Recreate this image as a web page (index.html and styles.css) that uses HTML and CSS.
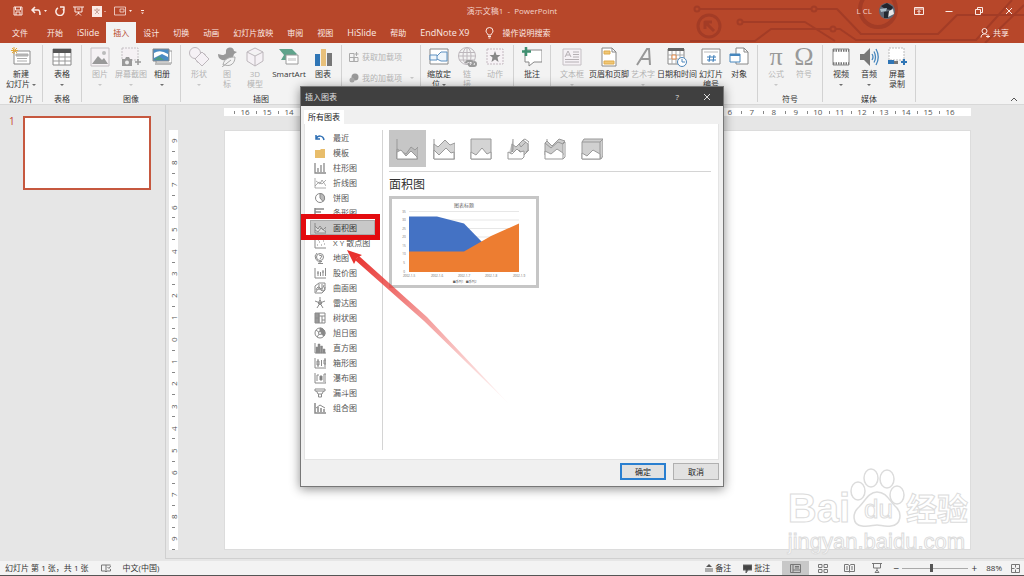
FILE: index.html
```html
<!DOCTYPE html>
<html lang="zh-CN">
<head>
    <meta charset="UTF-8" />
    <meta name="viewport" content="width=device-width, initial-scale=1" />
    <title>演示文稿1 - PowerPoint</title>
    <link rel="stylesheet" href="styles.css">
</head>
<body>

<header>
  <svg class="circuit" width="340" height="43" viewBox="684 0 340 43">
    <g fill="none" stroke="#a33c26" stroke-width="2">
      <path d="M700 9H811M817 9H837L861 34H938L957 15H1024"/>
      <path d="M743 22H805L835 41M690 41H755L771 29H830M836 29H840L856 40H976L1012 0M985 43L1024 5"/>
      <circle cx="697" cy="9" r="2.5"/><circle cx="740" cy="22" r="2.5"/><circle cx="814" cy="9" r="2.5"/><circle cx="833" cy="29" r="2.5"/>
      <circle cx="709" cy="26" r="11" stroke-width="3"/><path d="M714 31L705 22M705 29V22H712" stroke-width="3"/>
      <circle cx="878" cy="9" r="18" stroke-width="4"/>
    </g>
  </svg>

  <div class="titlebar">
    <div class="quick">
      <button aria-label="保存"><svg width="10" height="10" viewBox="0 0 10 10"><path d="M1 1H9V9H1ZM3 9V6H7V9M2.5 1V4H7.500V1"/></svg></button>
      <button aria-label="撤消"><svg width="16" height="10" viewBox="0 0 16 10"><path d="M4 1L1 4L4 7M1 4H7C9 4 9 6 9 9" stroke-width="1.6"/><path class="solid" d="M13 4H16L14.500 6Z"/></svg></button>
      <button aria-label="恢复"><svg width="10" height="10" viewBox="0 0 10 10"><path d="M3 2A4 4 0 1 0 8 3M5 1H9V4.500" stroke-width="1.5"/></svg></button>
      <button aria-label="放映"><svg width="11" height="10" viewBox="0 0 11 10"><path d="M0 1H11M2 1V6H9V1M4 3H7M5.500 6V8M3 9.500L5.500 7L8 9.500"/></svg></button>
      <button aria-label="字体"><svg width="14" height="11" viewBox="0 0 14 11"><path class="solid" d="M0 0H10V11H0Z"/><path d="M2 4H8M5 2V4M3 8L7 4M3 4L7 8" stroke="#c9a79e"/><path class="solid" d="M12 5H14V6H12Z" opacity=".5"/></svg></button>
      <button aria-label="形状"><svg width="19" height="10" viewBox="0 0 19 10"><path d="M.5 1H11.500V9H.5ZM6 3H10V6H6Z" opacity=".75"/><path class="solid" d="M15 4H18L16.500 6Z"/></svg></button>
      <button aria-label="自定义"><svg width="4" height="8" viewBox="0 0 4 8"><path class="solid" d="M0 3H3V4H0ZM0 5.500H3L1.500 7Z"/></svg></button>
    </div>
    <div class="doc-title">演示文稿1&nbsp; -&nbsp; PowerPoint</div>
    <div class="window-buttons">
      <span class="user">L CL</span>
      <svg class="avatar" width="16" height="16" viewBox="0 0 16 16"><circle cx="8" cy="8" r="8" fill="#5e6775"/><path d="M2 3L8 0L14 4L12 7L6 6Z" fill="#20242d"/><path d="M1 6L8 5L7 8L2 9Z" fill="#a9bdc9"/><path d="M8 9L14 6L15 11L9 14Z" fill="#e6e6e8"/><path d="M5 9L10 8L9 15L5 15Z" fill="#222831"/></svg>
      <button aria-label="功能区显示选项"><svg width="10" height="10" viewBox="0 0 10 10"><path d="M.5 1.500H9.500V8.500H.5ZM.5 3H9.500M5 8V4.500M3.500 6L5 4.500L6.500 6"/></svg></button>
      <button aria-label="最小化"><svg width="10" height="10" viewBox="0 0 10 10"><path d="M1.500 5.500H8.500"/></svg></button>
      <button aria-label="还原"><svg width="10" height="10" viewBox="0 0 10 10"><path d="M1.500 3.500H6.500V8.500H1.500ZM3.500 3.500V1.500H8.500V6.500H6.500"/></svg></button>
      <button aria-label="关闭"><svg width="10" height="10" viewBox="0 0 10 10"><path d="M2 2L8 8M8 2L2 8"/></svg></button>
    </div>
  </div>

  <nav class="tabs">
    <button class="file">文件</button>
    <button>开始</button>
    <button class="en">iSlide</button>
    <button class="active">插入</button>
    <button>设计</button>
    <button>切换</button>
    <button>动画</button>
    <button>幻灯片放映</button>
    <button>审阅</button>
    <button>视图</button>
    <button class="en">HiSlide</button>
    <button>帮助</button>
    <button class="en">EndNote X9</button>
    <button class="tell-me"><svg width="9" height="12" viewBox="0 0 9 12"><path d="M3 8C3 6.500 1 6 1 4A3.500 3.500 0 0 1 8 4C8 6 6 6.500 6 8ZM3 9.500H6M3.500 11H5.500"/></svg>操作说明搜索</button>
    <button class="share"><svg width="10" height="10" viewBox="0 0 10 10"><circle cx="4.500" cy="3" r="2.500"/><path d="M1 9.500C1 7 2.500 6 4.500 6S6.500 6.500 7 7M6 8.500H10M8 6.500V10"/></svg>共享</button>
  </nav>
</header>

<section class="ribbon">
  <div class="group">
    <div class="tools">
      <button class="tool wide"><svg viewBox="0 0 20 20"><path d="M3 4H19V17H3Z" fill="#fff" stroke="#8a8a8a"/><path d="M5 7H17V9H5ZM6 11.500H16M6 14H16" fill="#bbb" stroke="#aaa"/><path d="M3 0V7M0 3.500H7M1 1L6 6M6 1L1 6" stroke="#e3a93c"/></svg>新建<br>幻灯片 <i class="caret"></i></button>
    </div>
    <h2>幻灯片</h2>
  </div>
  <div class="group">
    <div class="tools">
      <button class="tool"><svg viewBox="0 0 20 20"><path d="M1 2H19V18H1Z" fill="#fff" stroke="#888"/><path d="M1 2H19V6H1Z" fill="#555"/><path d="M1 10H19M1 14H19M7 6V18M13 6V18" stroke="#999"/></svg>表格<br><i class="caret"></i></button>
    </div>
    <h2>表格</h2>
  </div>
  <div class="group">
    <div class="tools">
      <button class="tool" disabled><svg viewBox="0 0 20 20"><path d="M1 1H19V19H1Z" fill="#f5f1f4" stroke="#c4bfc3"/><path d="M2 17L8 9L12 13L14 11L18 17Z" fill="#999"/><circle cx="14" cy="6" r="2" fill="#bbb"/></svg>图片<br><i class="caret"></i></button>
      <button class="tool mid" disabled><svg viewBox="0 0 20 20"><path d="M1 1H17V13H1Z" fill="#f5f1f4" stroke="#c4bfc3" stroke-dasharray="2 1"/><path d="M1 12H4L5 10H8L9 12H11V19H1Z" fill="#999"/><path d="M14 15H20M17 12V18" stroke="#999" stroke-width="1.500"/><circle cx="6" cy="15.500" r="2" fill="#eee"/></svg>屏幕截图<br><i class="caret"></i></button>
      <button class="tool"><svg viewBox="0 0 20 20"><path d="M4 4H20V16H4Z" fill="#fff" stroke="#999"/><path d="M1 2H17V14H1Z" fill="#4a8cc4" stroke="#888"/><path d="M2 6Q8 2 16 7V10L10 7L2 11Z" fill="#fff"/><path d="M2 13L7 9L12 13Z" fill="#4e9b80"/><path d="M3 17H19" stroke="#bbb" stroke-width="2"/></svg>相册<br><i class="caret"></i></button>
    </div>
    <h2>图像</h2>
  </div>
  <div class="group">
    <div class="tools">
      <button class="tool" disabled><svg viewBox="0 0 20 20"><g fill="#f5f1f5" stroke="#bdb7bc"><path d="M8 7H16V15H8Z"/><circle cx="6" cy="6" r="5.500"/><path d="M13 5L20 12L13 19L6 12Z"/></g></svg>形状<br><i class="caret"></i></button>
      <button class="tool" disabled><svg viewBox="0 0 20 20"><path d="M1 7L5 8C7 8 9 8 9 5A4 4 0 0 1 17 4L20 5L17 7C16 13 10 14 5 13C2 12 1 10 1 7Z" fill="#999"/><path d="M6 18C7 11 13 10 18 10C18 16 14 20 8 18ZM5 20L14 13" fill="#f2f2f2" stroke="#aaa"/></svg>图<br>标</button>
      <button class="tool" disabled><svg viewBox="0 0 20 20"><path d="M10 1L18 5V14L10 19L2 14V5ZM2 5L10 9L18 5M10 9V19" fill="#f5f1f5" stroke="#bdb7bc"/></svg>3D<br>模型</button>
      <button class="tool wide en"><svg viewBox="0 0 20 20"><path d="M0 2H13L18 7L15 10H8V13H2L5 8Z" fill="#5fa38b"/><path d="M7 8H19V17H7Z" fill="#fff" stroke="#999"/><path d="M9 11H17V14H9Z" fill="#ddd"/></svg>SmartArt</button>
      <button class="tool"><svg viewBox="0 0 20 20"><path d="M2 7H7V19H2Z" fill="#2f75b5"/><path d="M8 2H13V19H8Z" fill="#e8c07a"/><path d="M14 6H19V19H14Z" fill="#777"/></svg>图表</button>
    </div>
    <h2>插图</h2>
  </div>
  <div class="group addins">
    <button disabled><svg width="10" height="10" viewBox="0 0 10 10"><path d="M.5 1.500H5V9.500H.5ZM.5 5.500H9V9.500H5M5 5V9M7.500 0V4M5.500 2H9.500" fill="none" stroke="#aaa"/></svg>获取加载项</button>
    <button disabled><svg width="10" height="10" viewBox="0 0 10 10"><circle cx="6" cy="4" r="3.500" fill="#999"/><circle cx="3" cy="7" r="2.500" fill="#aaa"/></svg>我的加载项 <i class="caret"></i></button>
  </div>
  <div class="group">
    <div class="tools">
      <button class="tool"><svg viewBox="0 0 20 20"><path d="M1 2H19V17H1Z" fill="#fff" stroke="#888"/><path d="M1 8H8V13H1ZM8 9L12 5H18V14H12L8 12" fill="#eef5fb" stroke="#5b8fc0"/></svg>缩放定<br>位 <i class="caret"></i></button>
      <button class="tool" disabled><svg viewBox="0 0 20 20"><g fill="none" stroke="#bdb7bc"><circle cx="10" cy="9" r="8.500"/><ellipse cx="10" cy="9" rx="4" ry="8.500"/><path d="M2 5.500H18M1.500 9H18M2 13H18M10 1V17"/></g><path d="M9 16A2.500 2 0 0 1 11 14H14A2 2 0 0 1 14 18M12 16A2 2 0 0 0 14 19H17A2 2 0 0 0 17 15" fill="none" stroke="#999" stroke-width="2"/></svg>链<br>接</button>
      <button class="tool" disabled><svg viewBox="0 0 20 20"><path d="M2 2H18V17H2Z" fill="#f6f2f5" stroke="#c4b9c0" stroke-dasharray="2 1"/><path d="M10 4L11.500 8H15.500L12.500 10.500L13.500 15L10 12.500L6.500 15L7.500 10.500L4.500 8H8.500Z" fill="#888"/></svg>动作</button>
    </div>
  </div>
  <div class="group">
    <div class="tools">
      <button class="tool"><svg viewBox="0 0 20 20"><path d="M3 3H20V15H12L7 19V15H3Z" fill="#fff" stroke="#888"/><path d="M4 0V9M0 4.500H9" stroke="#3f8f70" stroke-width="2.500"/></svg>批注</button>
    </div>
  </div>
  <div class="group">
    <div class="tools">
      <button class="tool mid" disabled><svg viewBox="0 0 20 20"><path d="M1 2H19V18H1Z" fill="#f5f1f5" stroke="#c4bfc3"/><path d="M3 10L6 4L9 10M4 8H8M11 5H17M11 7.500H17M11 10H17M3 12.500H17M3 15H17" fill="none" stroke="#b5b0b4"/></svg>文本框<br><i class="caret"></i></button>
      <button class="tool wide"><svg viewBox="0 0 20 20"><path d="M3 1H13L17 5V19H3Z" fill="#fff" stroke="#888"/><path d="M13 1V5H17" fill="none" stroke="#888"/><path d="M5 4H11V7H5ZM5 14H15V17H5Z" fill="#f0c777" stroke="#e0ac4c"/></svg>页眉和页脚</button>
      <button class="tool" disabled><svg viewBox="0 0 20 20"><path d="M4 18L14 2H16L17 18M8 12H16" fill="none" stroke="#999" stroke-width="2"/></svg>艺术字<br><i class="caret"></i></button>
      <button class="tool wide"><svg viewBox="0 0 20 20"><path d="M1 2H17V17H1Z" fill="#fff" stroke="#888"/><path d="M1 1H17V4H1Z" fill="#666"/><path d="M1 8H17M1 12H17M5 4V17M9 4V17M13 4V17" stroke="#aaa"/><path d="M5 8H9V12H5Z" fill="#fff" stroke="#e28a4b"/><circle cx="15" cy="15" r="4.500" fill="#fff" stroke="#4e87bb"/><path d="M15 12V15H18" fill="none" stroke="#4e87bb"/></svg>日期和时间</button>
      <button class="tool"><svg viewBox="0 0 20 20"><path d="M1 2H19V17H1Z" fill="#fff" stroke="#888"/><path d="M3 5H17" stroke="#bbb"/><path d="M9 8L8 15M13 8L12 15M6 10H15M6 13H15" stroke="#3b7cb8"/></svg>幻灯片<br>编号</button>
      <button class="tool"><svg viewBox="0 0 20 20"><path d="M7 1H15L19 5V17H7Z" fill="#fff" stroke="#888"/><path d="M15 1V5H19" fill="none" stroke="#888"/><path d="M1 7H11V15H1Z" fill="#fff" stroke="#4686bd"/><path d="M1 7H11V9H1Z" fill="#4686bd"/></svg>对象</button>
    </div>
  </div>
  <div class="group">
    <div class="tools">
      <button class="tool" disabled><span class="glyph">π</span>公式<br><i class="caret"></i></button>
      <button class="tool" disabled><span class="glyph">Ω</span>符号</button>
    </div>
    <h2>符号</h2>
  </div>
  <div class="group">
    <div class="tools">
      <button class="tool"><svg viewBox="0 0 20 20"><path d="M2 2H18V18H2Z" fill="#fff" stroke="#888"/><path d="M2 3.500H18M2 16.500H18" stroke="#777" stroke-width="2.500" stroke-dasharray="1.500 1"/></svg>视频<br><i class="caret"></i></button>
      <button class="tool"><svg viewBox="0 0 20 20"><path d="M1 7H5L11 1V19L5 13H1Z" fill="#777"/><path d="M13 7Q15 10 13 13M15 4.500Q18 10 15 15.500M17 2Q21.500 10 17 18" fill="none" stroke="#4686bd" stroke-width="1.300"/></svg>音频<br><i class="caret"></i></button>
      <button class="tool"><svg viewBox="0 0 20 20"><path d="M2 1H17V13H2Z" fill="#fff" stroke="#bbb" stroke-dasharray="2 1"/><path d="M1 13H7V17H1Z" fill="#2f75b5"/><path d="M7 14H11V17H7Z" fill="#777"/><path d="M14 15H20M17 12V18" stroke="#2f75b5" stroke-width="2"/></svg>屏幕<br>录制</button>
    </div>
    <h2>媒体</h2>
  </div>
  <button class="collapse" aria-label="折叠功能区"><svg width="8" height="5" viewBox="0 0 8 5"><path d="M1 4L4 1L7 4" fill="none" stroke="#555"/></svg></button>
</section>

<main>
  <aside class="slides">
    <span>1</span>
    <div class="thumb"></div>
  </aside>
  <div class="editor">
    <div class="ruler ruler-h" id="ruler-h"></div>
    <div class="ruler ruler-v" id="ruler-v"></div>
    <div class="slide"></div>
  </div>
</main>

<footer>
  <span>幻灯片 第 1 张，共 1 张</span>
  <button aria-label="拼写检查"><svg width="10" height="10" viewBox="0 0 10 10"><path d="M5 2V9M5 2H.5V8H4L5 9L6 8H9.500V6M5 2H9.500M6.500 4L8 5.500L10 2.500"/></svg></button>
  <span>中文(中国)</span>
  <div class="views">
    <button class="notes"><svg width="8" height="8" viewBox="0 0 8 8"><path d="M0 5H8M0 7H8"/><path d="M4 0L7 3H1Z" fill="#555"/></svg>备注</button>
    <button class="notes"><svg width="9" height="9" viewBox="0 0 9 9"><path d="M0 1H9V6H5L3 9V6H0Z" fill="#444"/></svg>批注</button>
    <button class="view active" aria-label="普通视图"><svg width="11" height="9" viewBox="0 0 11 9"><path d="M.5.5H10.500V8.500H.5ZM3 .5V8.500M3 6H10M5 2.500H9M5 4H9"/></svg></button>
    <button class="view" aria-label="幻灯片浏览"><svg width="10" height="9" viewBox="0 0 10 9"><path d="M.5.5H4V3.500H.5ZM6 .5H9.500V3.500H6ZM.5 5.500H4V8.500H.5ZM6 5.500H9.500V8.500H6Z"/></svg></button>
    <button class="view" aria-label="阅读视图"><svg width="11" height="9" viewBox="0 0 11 9"><path d="M5.500 1.500V8.500M.5.5H4L5.500 1.500L7 .5H10.500V7.500H.5ZM2 3H4M2 5H4M7 3H9M7 5H9"/></svg></button>
    <button class="view" aria-label="幻灯片放映"><svg width="10" height="10" viewBox="0 0 10 10"><path d="M0 .5H10M1.500 1V5H8.500V1M5 5V8M3 9.500H7M5 7L3 9.500M5 7L7 9.500"/></svg></button>
    <button class="step" aria-label="缩小">−</button>
    <input type="range" min="0" max="100" value="44" aria-label="缩放">
    <button class="step" aria-label="放大">+</button>
    <span class="percent">88%</span>
    <button aria-label="适应窗口"><svg width="9" height="9" viewBox="0 0 9 9"><path d="M.5.5H8.500V8.500H.5ZM4.500 1V3.500M4.500 5.500V8M1 4.500H3.500M5.500 4.500H8"/></svg></button>
  </div>
</footer>

<div class="dialog" role="dialog" aria-label="插入图表">
  <div class="dialog-title">
    <span>插入图表</span>
    <button aria-label="帮助">?</button>
    <button aria-label="关闭对话框"><svg width="8" height="8" viewBox="0 0 8 8"><path d="M1 1L7 7M7 1L1 7" stroke="#ddd"/></svg></button>
  </div>
  <div class="dialog-body">
    <button class="dialog-tab">所有图表</button>
    <div class="panel">
      <ul class="types">
        <li><button><svg viewBox="0 0 12 12"><path d="M2 3V7H6M2 7C4 3 9 3 10 8" stroke="#2e6fb4" stroke-width="1.500"/></svg>最近</button></li>
        <li><button><svg viewBox="0 0 12 12"><path d="M1 3H6L7 2H11V11H1Z" fill="#e8bd6b" stroke="none"/></svg>模板</button></li>
        <li><button><svg viewBox="0 0 12 12"><path d="M1 1V11H12M4 10V6M7 10V3M10 10V1" stroke-width="1.300"/></svg>柱形图</button></li>
        <li><button><svg viewBox="0 0 12 12"><path d="M1 1V11H12M1 9L5 5L8 7L12 3M2 4L6 7L8 3L12 9" stroke-width=".7"/></svg>折线图</button></li>
        <li><button><svg viewBox="0 0 12 12"><circle cx="6" cy="6" r="4.500"/><path d="M6 6V1.500A4.500 4.500 0 0 1 9 9.500Z" fill="#bbb"/></svg>饼图</button></li>
        <li><button><svg viewBox="0 0 12 12"><path d="M1 1V11M1 2H10M1 5H7M1 8H9" stroke-width="1.500"/></svg>条形图</button></li>
        <li class="selected"><button><svg viewBox="0 0 12 12"><path d="M1 1V11H12V5L9 8L6 4L4 7L1 4" fill="#ddd"/><path d="M1 8L4 10L7 6L12 10"/></svg>面积图</button></li>
        <li><button><svg viewBox="0 0 12 12"><path d="M1 1V11H12M3 8H4M5 5H6M7 8H8M9 4H10M4 3H5M10 7H11"/></svg>X Y 散点图</button></li>
        <li><button><svg viewBox="0 0 12 12"><circle cx="6" cy="5" r="3.500"/><path d="M3 1A5 5 0 0 0 8 9.500M4 11.500H9M6 10V11M5 3L8 4L6 7"/></svg>地图</button></li>
        <li><button><svg viewBox="0 0 12 12"><path d="M1 1V11H12M4 9V4M6.500 9V5M9 9V3M11.500 9V1M3 6H5M8 5H10"/></svg>股价图</button></li>
        <li><button><svg viewBox="0 0 12 12"><path d="M1 4L5 1H11V8L8 11H1ZM2 8Q4 3 6 6T10 3M2 10Q4 5 7 8T11 5M5 2V8M8 2V9"/></svg>曲面图</button></li>
        <li><button><svg viewBox="0 0 12 12"><path d="M6 0V6L1 4M6 6L11 4M6 6L3 11M6 6L9 11M6 3L8 6L6 8L4 6Z"/></svg>雷达图</button></li>
        <li><button><svg viewBox="0 0 12 12"><path d="M1 1H5V11H1Z" fill="#999"/><path d="M5 1H11V11H5ZM5 4H11M8 4V11M8 8H11M1 6H5"/></svg>树状图</button></li>
        <li><button><svg viewBox="0 0 12 12"><circle cx="6" cy="6" r="5"/><path d="M6 1A5 5 0 0 1 10 9L6 6Z" fill="#888"/><path d="M2 3L6 6L3 10"/><circle cx="6" cy="6" r="1.500" fill="#fff"/></svg>旭日图</button></li>
        <li><button><svg viewBox="0 0 12 12"><path d="M1 1V11H12"/><path d="M2 5H4V11H2ZM4 2H6V11H4ZM6.500 4H8.500V11H6.500ZM9 7H11V11H9Z" fill="#888" stroke-width=".5"/></svg>直方图</button></li>
        <li><button><svg viewBox="0 0 12 12"><path d="M1 1V11H12M4 2V10M7.500 3V9M11 1V10M3 4H5V8H3ZM10 3H12V7H10Z"/></svg>箱形图</button></li>
        <li><button><svg viewBox="0 0 12 12"><path d="M1 1V11H12V2H10V10M3 3V9M3 3H5"/><path d="M6 4H8V8H6Z" fill="#777"/></svg>瀑布图</button></li>
        <li><button><svg viewBox="0 0 12 12"><path d="M1 2H11V4H1ZM2.500 4L4 7H8L9.500 4M4.500 7V10H7.500V7"/></svg>漏斗图</button></li>
        <li><button><svg viewBox="0 0 12 12"><path d="M1 1V11H12M4 10V5M7 10V6M10 10V7" stroke-width="1.500"/><path d="M2 6L6 3L11 6"/></svg>组合图</button></li>
      </ul>
      <div class="detail">
        <div class="variants">
          <button class="active" aria-label="面积图"><svg viewBox="0 0 22 22"><path d="M1 1V21"/><path d="M1 11L10 16L15 9L19 12L22 9V21H1Z" fill="#bbb"/><path class="front" d="M1 14L5 12L10 18L15 13L21 19V21H1Z"/></svg></button>
          <button aria-label="堆积面积图"><svg viewBox="0 0 22 22"><path d="M1 1V21"/><path d="M1 6L5 9L12 2L17 7L22 5V21H1Z" fill="#d4d4d4"/><path class="front" d="M1 12L6 17L13 10L18 15L21 14V21H1Z"/></svg></button>
          <button aria-label="百分比堆积面积图"><svg viewBox="0 0 22 22"><path d="M1 1H21V21H1Z" fill="#d4d4d4"/><path class="front" d="M1 14L6 17L12 10L17 16L21 14V21H1Z"/></svg></button>
          <button aria-label="三维面积图"><svg viewBox="0 0 22 22"><path d="M6 1V12L1 18M5 6L9 9L16 2L21 6V13L17 17L12 12L8 16L5 13Z" fill="#ccc"/><path d="M16 2L18 1L22 4V12L19 14M12 6L14 9L19 4"/><path class="front" d="M1 14L5 16L10 11L13 14L17 13V19L15 21H1Z"/></svg></button>
          <button aria-label="三维堆积面积图"><svg viewBox="0 0 22 22"><path d="M1 5L3 3L8 8L15 1L21 3L19 5V17H1Z" fill="#ccc"/><path d="M3 1V4M1 5L7 10L14 4L19 6L21 4V19L19 21"/><path class="front" d="M1 13L7 16L13 11L19 15V21H1Z"/></svg></button>
          <button aria-label="三维百分比堆积面积图"><svg viewBox="0 0 22 22"><path d="M1 4L3 1H22V18L20 21H1Z" fill="#d0d0d0"/><path d="M1 4H19V21M19 4L22 1"/><path class="front" d="M1 15L6 18L12 12L19 16V21H1Z"/></svg></button>
        </div>
        <h3>面积图</h3>
        <button class="preview" aria-label="面积图预览">
          <svg viewBox="0 0 144 86">
            <path d="M17 12.500H127M17 21H127M17 29.500H127M17 38H127M17 46.500H127M17 55H127M17 63.500H127" stroke="#ddd" stroke-width=".7"/>
            <path d="M17 17.500H45L72 24.500L90 43L99 72H17Z" fill="#4472c4"/>
            <path d="M17 52.500H72L99 37L127 24.500V73H17Z" fill="#ed7d31"/>
            <text class="chart-title" x="72" y="8">图表标题</text>
            <g class="axis">
              <text x="12" y="14">35</text><text x="12" y="22">30</text><text x="12" y="31">25</text><text x="12" y="39">20</text>
              <text x="12" y="48">15</text><text x="12" y="56">10</text><text x="12" y="65">5</text><text x="12" y="74">0</text>
              <text x="17" y="78">2002-1-5</text><text x="45" y="78">2002-1-6</text><text x="72" y="78">2002-1-7</text><text x="99" y="78">2002-1-8</text><text x="127" y="78">2002-1-9</text>
              <text x="66" y="84">■系列1</text><text x="79" y="84">■系列2</text>
            </g>
          </svg>
        </button>
      </div>
    </div>
    <div class="actions">
      <button class="ok">确定</button>
      <button>取消</button>
    </div>
  </div>
</div>

<div class="highlight"></div>
<svg class="pointer" width="170" height="160" viewBox="0 0 170 160">
  <defs>
    <linearGradient id="fade" x1="0" y1="0" x2="1" y2="1">
      <stop offset="0" stop-color="#e8322f"/>
      <stop offset=".4" stop-color="#e8322f" stop-opacity=".5"/>
      <stop offset="1" stop-color="#e8322f" stop-opacity="0"/>
    </linearGradient>
  </defs>
  <path d="M8 10L12 6L80 67L164 156L77 71Z" fill="url(#fade)"/>
  <path d="M0 0L15 5L10 8L7 14Z" fill="#e8322f"/>
</svg>

<div class="watermark" aria-hidden="true">
  <div class="brand">
    <span class="latin">Bai</span>
    <div class="paw">
      <svg width="56" height="60" viewBox="0 0 56 60">
        <g fill="#fff" stroke="#dcdcdc" stroke-width="1.500">
          <ellipse cx="8" cy="23" rx="7" ry="9"/><ellipse cx="21" cy="10" rx="7" ry="9"/><ellipse cx="37" cy="11" rx="7" ry="9"/><ellipse cx="47" cy="27" rx="7" ry="9"/>
          <path d="M27 24C36 24 39 32 45 38C53 45 51 57 41 58C34 59 31 57 27 57S19 59 12 58C2 57 2 45 9 39C15 33 19 24 27 24Z"/>
        </g>
      </svg>
      <span class="du">du</span>
    </div>
    <span class="han">经验</span>
  </div>
  <div class="site">jingyan.baidu.com</div>
</div>

<script>
function fillRuler(id, max) {
    const ruler = document.getElementById(id);
    for (let i = -max; i <= max; i++) {
        const mark = document.createElement('span');
        mark.textContent = Math.abs(i);
        ruler.appendChild(mark);
    }
}

fillRuler('ruler-h', 16);
fillRuler('ruler-v', 9);
</script>

</body>
</html>
```
FILE: styles.css
```css
* { box-sizing: border-box; }
body {
  margin: 0;
  position: relative;
  height: 100vh;
  overflow: hidden;
  display: flex;
  flex-direction: column;
  font-family: "Open Sans", "Noto Sans CJK SC", sans-serif;
  font-size: 8px;
  line-height: 10px;
  color: #333;
  background: #e6e6e6;
}
button {
  margin: 0;
  padding: 0;
  border: none;
  background: none;
  font: inherit;
  color: inherit;
  white-space: nowrap;
}
svg { display: block; flex: none; }
h2, h3 { margin: 0; font-weight: normal; }

/* title bar and tabs */
header {
  position: relative;
  background: #b7472a;
  color: #fbeae5;
}
header svg path, header svg circle { stroke-linejoin: round; }
.circuit { position: absolute; top: 0; right: 0; }
.titlebar {
  position: relative;
  display: grid;
  grid-template-columns: 1fr auto 1fr;
  align-items: center;
  height: 22px;
}
.doc-title { color: #f3d3ca; }
.quick { display: flex; align-items: center; gap: 8px; padding-left: 13px; }
.titlebar button svg, .tabs svg { fill: none; stroke: #fbeae5; stroke-width: 1; }
.titlebar .solid { fill: #fbeae5; stroke: none; }
.window-buttons {
  display: flex;
  align-items: center;
  justify-content: flex-end;
  gap: 20px;
  padding-right: 10px;
}
.user { margin-right: -13px; color: #f3d3ca; }
.avatar { margin-right: -1px; }
.tabs { position: relative; display: flex; height: 21px; }
.tabs button { padding: 0 7px; }
.tabs .file { padding: 0 12px; }
.tabs .en { font-size: 9px; }
.tabs .active { background: #f3f3f3; color: #b7472a; }
.tabs .tell-me, .tabs .share { display: flex; align-items: center; gap: 8px; }
.tabs .tell-me { padding-left: 9px; }
.tabs .share { margin-left: auto; padding-right: 15px; gap: 3px; }

/* ribbon */
.ribbon {
  display: flex;
  height: 62px;
  padding-top: 2px;
  background: #f3f3f3;
  border-bottom: 1px solid #d8d8d8;
}
.group {
  display: flex;
  flex-direction: column;
  justify-content: space-between;
  height: 57px;
  padding: 2px 4px 0;
  border-right: 1px solid #d2d2d2;
}
.group:nth-child(1) { padding: 2px 1px 0; }
.group:nth-child(2) { padding: 2px 5px 0; }
.group h2 { font-size: 8px; line-height: 10px; text-align: center; margin-bottom: -2px; }
.tools { display: flex; align-items: flex-start; }
.tool { width: 28px; text-align: center; }
.tool.mid { width: 34px; }
.tool.wide { width: 40px; }
.tool svg, .glyph { display: block; width: 20px; height: 20px; margin: 0 auto 2px; fill: none; }
.glyph { font: 26px/20px "Liberation Serif", serif; color: #999; }
.ribbon button:disabled { color: #b4b4b4; }
.caret {
  display: inline-block;
  vertical-align: middle;
  border: 2px solid transparent;
  border-top-color: currentColor;
  border-bottom: none;
  opacity: 0.7;
}
.addins { width: 79px; justify-content: flex-start; gap: 11px; padding: 7px 7px 0; }
.addins button { display: flex; align-items: center; gap: 3px; }
.addins .caret { margin-left: 5px; }
.collapse { margin: auto 6px 0 auto; padding-bottom: 2px; }

/* slide list and editor */
main { flex: 1; display: grid; grid-template-columns: 165px 1fr; min-height: 0; }
.slides {
  display: flex;
  align-items: flex-start;
  gap: 8px;
  padding: 11px 14px 0 9px;
  font-size: 10px;
  color: #c8452a;
}
.thumb {
  flex: 1;
  aspect-ratio: 128 / 74;
  background: #fff;
  border: 2px solid #c6583f;
}
.editor {
  display: grid;
  grid-template: 8px 1fr / 9px 1fr;
  gap: 14px 46px;
  margin-bottom: 2px;
  padding: 3px 53px 8px 3px;
  border-left: 1px solid #d0d0d0;
  border-bottom: 1px solid #d0d0d0;
}
.ruler { display: flex; background: #fff; color: #555; line-height: 8px; }
.ruler span { flex: 1; text-align: center; }
.ruler-h { grid-column: 2; padding: 0 10px; }
.ruler-h span { background: linear-gradient(#888, #888) left center / 1px 3px no-repeat; }
.ruler-v {
  grid-row: 2;
  writing-mode: vertical-rl;
  transform: rotate(180deg);
  line-height: 9px;
}
.ruler-v span { background: linear-gradient(#888, #888) center top / 3px 1px no-repeat; }
.slide { background: #fff; border: 1px solid #dcdcdc; }

/* status bar */
footer {
  display: flex;
  align-items: center;
  gap: 12px;
  height: 15px;
  padding: 0 4px 0 5px;
  background: #f3f3f3;
  border-bottom: 1px solid #555;
}
footer svg { fill: none; stroke: #777; stroke-width: 1; }
.views { display: flex; align-items: center; align-self: stretch; margin-left: auto; }
.notes { display: flex; align-items: center; gap: 2px; margin-right: 12px; }
.notes svg { stroke: none; }
.notes path:first-child { stroke: #666; }
.view { display: flex; align-items: center; justify-content: center; width: 27px; height: 100%; }
.view.active { background: #c8c8c8; }
.step { width: 12px; font-size: 10px; }
.views input {
  appearance: none;
  width: 66px;
  height: 8px;
  margin: 0;
  background: linear-gradient(#aaa, #aaa) center / 100% 1px no-repeat;
}
.views input::-webkit-slider-thumb { appearance: none; width: 3px; height: 8px; background: #555; }
.percent { margin: 0 9px 0 6px; }

/* insert chart dialog */
.dialog {
  position: absolute;
  left: 300px;
  top: 86px;
  width: 424px;
  border: 1px solid #777;
  background: #f0f0f0;
  box-shadow: 0 2px 10px rgba(0,0,0,0.45);
}
.dialog-title {
  display: flex;
  align-items: center;
  gap: 24px;
  height: 19px;
  padding: 0 12px 0 4px;
  background: #404040;
  color: #e0e0e0;
}
.dialog-title span { margin-right: auto; }
.dialog-body { padding: 4px 4px 6px 3px; }
.dialog-tab {
  display: block;
  height: 14px;
  padding: 0 4px;
  background: #fff;
  color: #222;
}
.panel {
  display: flex;
  padding: 6px 7px 9px 5px;
  background: #fff;
  border: 1px solid #e4e4e4;
  border-top: none;
}
.types {
  width: 73px;
  margin: 0;
  padding: 0 7px 35px 0;
  list-style: none;
  border-right: 1px solid #d4d4d4;
}
.types button {
  display: flex;
  align-items: center;
  gap: 7px;
  width: 100%;
  height: 15px;
  padding-left: 3px;
  border: 1px solid transparent;
  color: #555;
}
.types svg { width: 12px; height: 12px; fill: none; stroke: #8a8a8a; stroke-width: 1; }
.types .selected button { background: #c8c8c8; border-color: #aaa; color: #333; }
.detail { flex: 1; padding-left: 6px; }
.variants { display: flex; padding-bottom: 4px; border-bottom: 1px solid #d4d4d4; }
.variants button { width: 37px; height: 37px; padding: 8px 7px; }
.variants .active { background: #c6c6c6; }
.variants svg { width: 22px; height: 22px; fill: none; stroke: #999; stroke-width: 1; }
.variants .front { fill: #fff; }
.detail h3 { margin: 5px 0 3px; font-size: 12px; line-height: 16px; color: #333; }
.preview { display: block; width: 150px; border: 3px solid #c6c6c6; background: #fff; }
.preview text { text-anchor: middle; fill: #666; }
.chart-title { font-size: 5px; }
.axis { font-size: 3px; }
.actions { display: flex; justify-content: flex-end; gap: 7px; padding-top: 3px; }
.actions button {
  width: 46px;
  height: 17px;
  border: 1px solid #b0b0b0;
  background: #e1e1e1;
  color: #222;
}
.actions .ok { border: 2px solid #2a7fd0; }

/* callout over the dialog */
.highlight {
  position: absolute;
  left: 301px;
  top: 214px;
  width: 79px;
  height: 26px;
  border: 5px solid #e30b0f;
}
.pointer { position: absolute; left: 347px; top: 250px; }

.watermark {
  position: absolute;
  right: 56px;
  bottom: 20px;
  color: #fff;
  font-family: "Liberation Sans", "Noto Sans CJK SC", sans-serif;
  -webkit-text-stroke: 1px #dcdcdc;
}
.brand { display: flex; align-items: flex-end; height: 60px; }
.latin { font-size: 40px; font-weight: bold; line-height: 40px; }
.paw { position: relative; }
.du { position: absolute; left: 14px; bottom: 6px; font-size: 26px; line-height: 26px; }
.han { font-size: 31px; font-weight: bold; line-height: 36px; }
.site { font-size: 22px; line-height: 28px; }
```
